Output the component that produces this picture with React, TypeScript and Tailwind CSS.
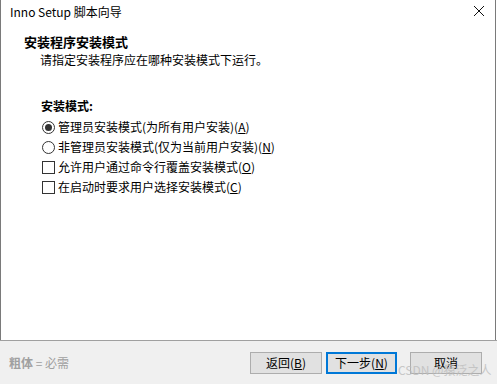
import React from "react";

const cjk = { fontFamily: '"Noto Sans CJK SC", "Liberation Sans", sans-serif' };

function Radio({ checked, label }: { checked?: boolean; label: React.ReactNode }) {
  return (
    <div className="flex items-center h-[20px]">
      <span className="w-[13px] h-[13px] rounded-full border border-[#333] bg-white flex items-center justify-center mr-[3px]">
        {checked && <span className="w-[7px] h-[7px] rounded-full bg-[#333]" />}
      </span>
      <span>{label}</span>
    </div>
  );
}

function Check({ label }: { label: React.ReactNode }) {
  return (
    <div className="flex items-center h-[20px]">
      <span className="w-[13px] h-[13px] border border-[#333] bg-white mr-[3px]" />
      <span>{label}</span>
    </div>
  );
}

function Btn({ children, primary }: { children: React.ReactNode; primary?: boolean }) {
  return (
    <button
      className={
        "h-[22px] flex items-center justify-center bg-[#e1e1e1] text-[12px] text-black " +
        (primary ? "w-[71px] border-2 border-[#0078d7]" : "w-[72px] border border-[#adadad]")
      }
    >
      {children}
    </button>
  );
}

export default function App() {
  return (
    <div className="w-[497px] h-[384px] flex flex-col bg-white text-[12px] text-black" style={cjk}>
      <div className="flex-1 flex flex-col border-l border-r border-[#7a7a7a] mr-[1px]">
        <div className="h-[24px] flex items-center justify-between pl-[9px] pr-[10px]">
          <span className="text-[12px]">Inno Setup 脚本向导</span>
          <svg width="12" height="12" viewBox="0 0 12 12" className="mt-[-3px]">
            <path d="M1 1L11 11M11 1L1 11" stroke="#111" strokeWidth="1" />
          </svg>
        </div>
        <div className="pl-[23px] pt-[9px]">
          <div className="font-bold text-[13px] leading-[18px]">安装程序安装模式</div>
          <div className="pl-[16px] leading-[17px]">请指定安装程序应在哪种安装模式下运行。</div>
        </div>
        <div className="pl-[40px] pt-[28px]">
          <div className="font-bold text-[12px] leading-[20px] mb-[1px]">安装模式:</div>
          <div className="pl-[1px]">
            <Radio checked label={<>管理员安装模式(为所有用户安装)(<u>A</u>)</>} />
            <Radio label={<>非管理员安装模式(仅为当前用户安装)(<u>N</u>)</>} />
            <Check label={<>允许用户通过命令行覆盖安装模式(<u>O</u>)</>} />
            <Check label={<>在启动时要求用户选择安装模式(<u>C</u>)</>} />
          </div>
        </div>
      </div>
      <div className="relative h-[44px] bg-[#f0f0f0] border-t border-[#a0a0a0] flex items-center pl-[9px] pr-[15px]">
        <span className="text-[#a0a0a0] flex-1">
          <b>粗体</b> = 必需
        </span>
        <div className="flex items-center">
          <Btn>返回(<u>B</u>)</Btn>
          <div className="w-[4px]" />
          <Btn primary>下一步(<u>N</u>)</Btn>
          <div className="w-[13px]" />
          <Btn>取消</Btn>
        </div>
        <span className="pointer-events-none absolute left-[398px] top-[20px] text-[12px] text-[#bdbdbd] opacity-80">CSDN @猿泛之人</span>
      </div>
    </div>
  );
}
